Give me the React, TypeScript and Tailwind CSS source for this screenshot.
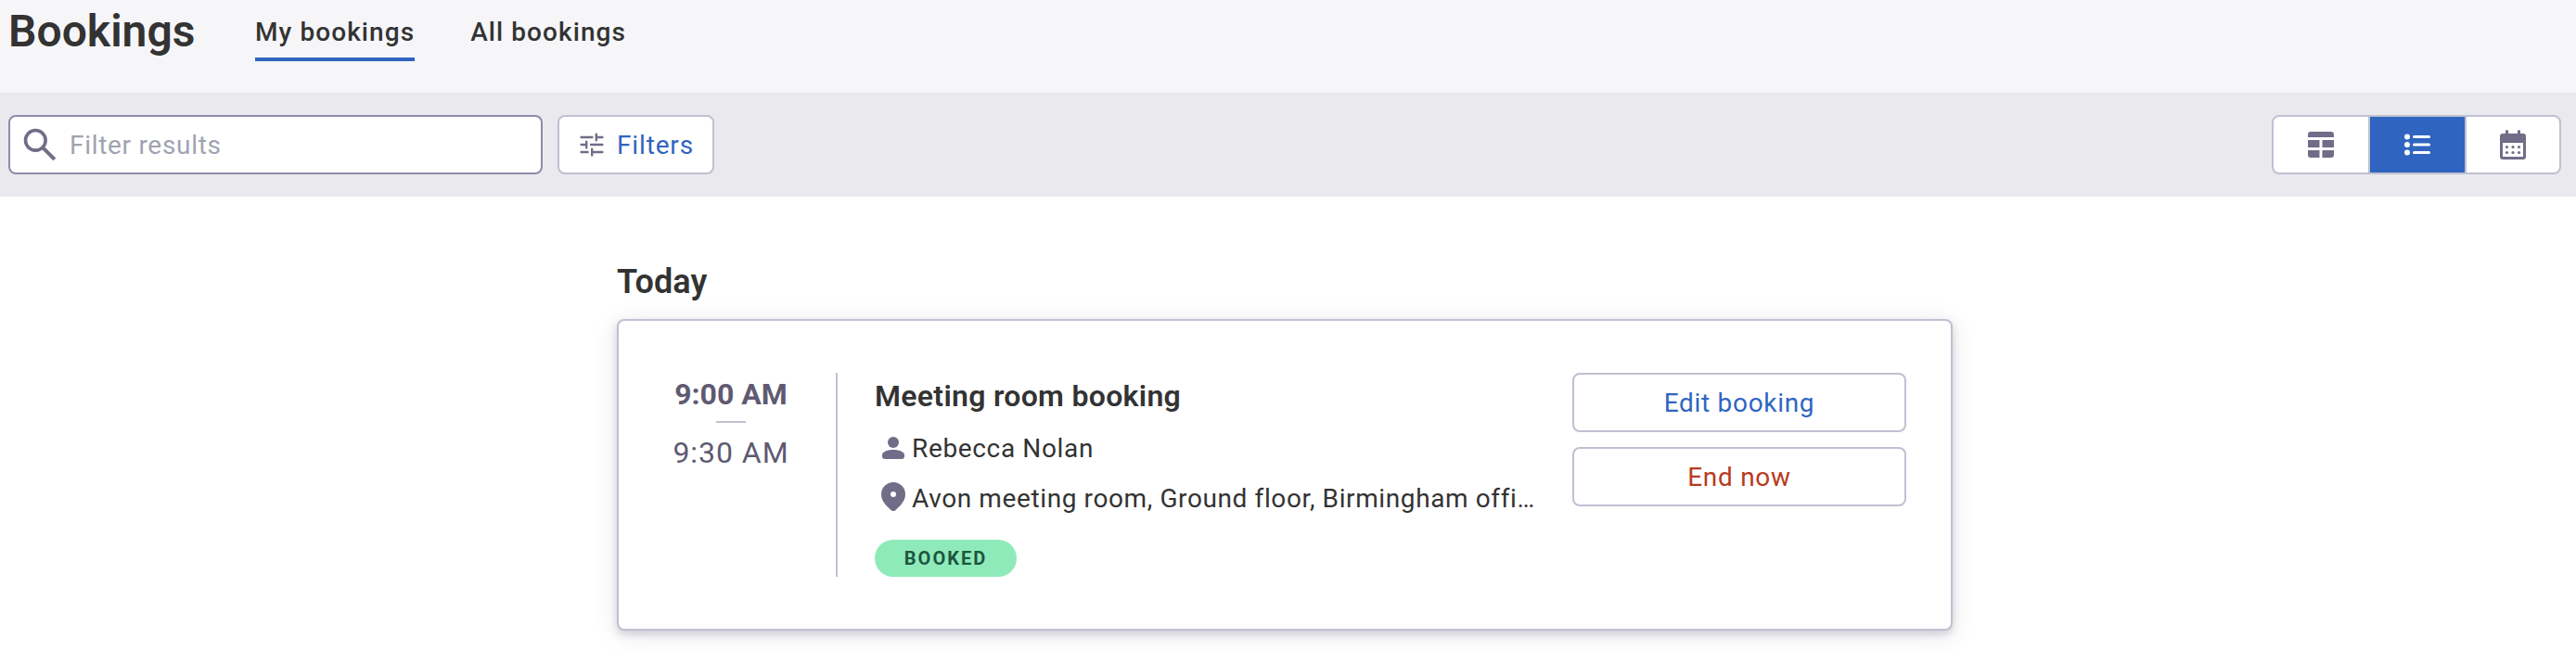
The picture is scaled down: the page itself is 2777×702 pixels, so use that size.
import React, { useState } from 'react'

type View = 'table' | 'list' | 'calendar'

const SearchIcon = () => (
    <svg width="36" height="36" viewBox="0 0 36 36" fill="none" stroke="#716c87" className="shrink-0">
        <circle cx="13.3" cy="13.3" r="10.8" strokeWidth="3.6" />
        <path d="M20.800 20.800 L33.900 33.900" strokeWidth="4" />
    </svg>
)

const TuneIcon = () => (
    <svg width="26" height="26" viewBox="0 0 26 26" fill="none" stroke="#716c87" strokeWidth="2.4" strokeLinecap="round" className="shrink-0">
        <path d="M1.6 5H13.4M18 5H24.4M17.8 1.6V8.2M1.6 13H7M12 13H24.4M7.2 9.8V16.4M1.6 21H8.6M13.4 21H24.4M13.2 17.8V24.4" />
    </svg>
)

const TableIcon = () => (
    <svg width="28" height="28" viewBox="0 0 28 28" fill="currentColor">
        <path d="M0 6V3a3 3 0 0 1 3-3h22a3 3 0 0 1 3 3v3zM0 9h12.5v8H0zM15.5 9H28v8H15.5zM0 20h12.5v8H3a3 3 0 0 1-3-3zM15.5 20H28v5a3 3 0 0 1-3 3h-9.500z" />
    </svg>
)

const ListIcon = () => (
    <svg width="28" height="24" viewBox="0 0 28 24" fill="currentColor">
        <circle cx="3" cy="3.500" r="3" />
        <circle cx="3" cy="12" r="3" />
        <circle cx="3" cy="20.500" r="3" />
        <rect x="9" y="2" width="19" height="3" rx="1.500" />
        <rect x="9" y="10.500" width="19" height="3" rx="1.500" />
        <rect x="9" y="19" width="19" height="3" rx="1.500" />
    </svg>
)

const CalendarIcon = () => (
    <svg width="28" height="32" viewBox="0 0 28 32" fill="currentColor">
        <path fillRule="evenodd" d="M3 4h3V1.500a1.500 1.500 0 0 1 3 0V4h10V1.500a1.500 1.500 0 0 1 3 0V4h3a3 3 0 0 1 3 3v22a3 3 0 0 1-3 3H3a3 3 0 0 1-3-3V7a3 3 0 0 1 3-3zM3 14v15h22V14z" />
        {[18.5, 24.5].map(y => [7.5, 14, 20.5].map(x => <circle key={`${x}-${y}`} cx={x} cy={y} r="1.600" />))}
    </svg>
)

const PersonIcon = () => (
    <svg width="24" height="24" viewBox="0 0 24 24" fill="#716c87" className="shrink-0">
        <circle cx="12" cy="6" r="6" />
        <path d="M0 19.500C0 15.800 7 14 12 14s12 1.800 12 5.500V21a3 3 0 0 1-3 3H3a3 3 0 0 1-3-3z" />
    </svg>
)

const PinIcon = () => (
    <svg width="26" height="31" viewBox="0 0 26 31" fill="#716c87" className="shrink-0">
        <path fillRule="evenodd" d="M13 0a13 13 0 0 1 13 13c0 6.500-4.500 12-11 17.400a3 3 0 0 1-4 0C4.500 25 0 19.500 0 13A13 13 0 0 1 13 0zm0 10a3 3 0 1 0 0 6 3 3 0 0 0 0-6z" />
    </svg>
)

const App: React.FC = () => {
    const [tab, setTab] = useState('My bookings')
    const [view, setView] = useState<View>('list')
    const [query, setQuery] = useState('')

    const views: { id: View; label: string; icon: React.ReactNode; cls: string }[] = [
        { id: 'table', label: 'Table', icon: <TableIcon />, cls: 'w-[102px]' },
        { id: 'list', label: 'List', icon: <ListIcon />, cls: 'w-[102px]' },
        { id: 'calendar', label: 'Calendar', icon: <CalendarIcon />, cls: 'w-[100px]' },
    ]

    const actionCls = "w-[360px] h-16 pt-[2px] rounded-lg border-2 border-[#bfc0d1] bg-white text-[28px] leading-8 tracking-[0.7px]"

    return (
        <div className="h-[702px] overflow-hidden bg-white font-['Roboto',sans-serif] text-[#333333]">
            <header className="flex items-start h-[100px] pl-[9px] bg-[#f6f6f9]">
                <h1 className="w-[266px] pt-[6px] text-[48px] leading-[56px] font-semibold">Bookings</h1>
                <nav className="flex gap-[60px] pt-[18px]">
                    {['My bookings', 'All bookings'].map(t => (
                        <button key={t} onClick={() => setTab(t)} className={`h-12 pb-[10px] border-b-4 text-[28px] leading-[34px] font-medium tracking-[1.08px] ${t === tab ? 'border-[#2f65c0]' : 'border-transparent'}`}>{t}</button>
                    ))}
                </nav>
            </header>

            <div className="flex items-center h-28 pl-[9px] pr-4 bg-[#eae9ee]">
                <label className="flex items-center gap-[14px] w-[576px] h-16 pl-[14px] rounded-lg border-2 border-[#8f8aa8] bg-white">
                    <SearchIcon />
                    <input value={query} onChange={e => setQuery(e.target.value)} placeholder="Filter results" className="flex-1 pt-[2px] text-[28px] tracking-[0.7px] placeholder:text-[#9fa3b1] outline-none" />
                </label>
                <button className="flex items-center gap-[14px] w-[169px] h-16 ml-4 pl-[22px] rounded-lg border-2 border-[#bfc0d1] bg-white text-[28px] tracking-[0.85px] text-[#2f65c0]">
                    <TuneIcon />
                    <span className="pt-px">Filters</span>
                </button>
                <div className="flex h-16 ml-auto rounded-lg border-2 border-[#bfc0d1] divide-x-2 divide-[#bfc0d1] bg-white overflow-hidden">
                    {views.map(v => (
                        <button key={v.id} aria-label={v.label} onClick={() => setView(v.id)} className={`box-content flex items-center justify-center ${v.cls} ${v.id === view ? 'bg-[#2f65c0] text-white' : 'text-[#716c87]'}`}>{v.icon}</button>
                    ))}
                </div>
            </div>

            <main className="w-[1440px] ml-[665px] pt-[71px]">
                <h2 className="h-[61px] text-[36px] leading-[42px] font-semibold tracking-[0.1px]">Today</h2>
                <article className="flex h-[336px] pt-14 pr-12 rounded-lg border-2 border-[#bfc0d1] bg-white shadow-[0_4px_8px_rgba(40,40,70,0.18),0_4px_28px_rgba(40,40,70,0.10)]">
                    <div className="flex flex-col items-center w-[236px] h-[220px] pl-2 border-r-2 border-[#bfc0d1] text-[32px] leading-10 text-[#5f5a72]">
                        <time className="pt-[3px] font-bold">9:00 AM</time>
                        <span className="w-8 h-[2px] mt-[9px] bg-[#bfc0d1]" />
                        <time className="mt-3 tracking-[0.95px]">9:30 AM</time>
                    </div>
                    <div className="flex flex-col w-[752px] h-[220px] pl-10">
                        <h3 className="pt-[5px] h-[51px] text-[32px] leading-10 font-semibold tracking-[0.3px]">Meeting room booking</h3>
                        <div className="flex items-center gap-2 h-[60px] pl-2">
                            <PersonIcon />
                            <span className="pt-px text-[28px] leading-9 tracking-[0.65px]">Rebecca Nolan</span>
                        </div>
                        <div className="flex items-start gap-[7px] h-12 pl-[7px] pt-[7px]">
                            <PinIcon />
                            <span className="text-[28px] leading-9 tracking-[0.61px] whitespace-nowrap">Avon meeting room, Ground floor, Birmingham offi…</span>
                        </div>
                        <span className="mt-auto flex items-center justify-center w-[153px] h-10 rounded-full bg-[#8eebb9] text-[20px] font-bold tracking-[2px] text-[#1e5540]">BOOKED</span>
                    </div>
                    <div className="flex flex-col gap-4 ml-10">
                        <button className={`${actionCls} text-[#2f65c0]`}>Edit booking</button>
                        <button className={`${actionCls} text-[#b83a20]`}>End now</button>
                    </div>
                </article>
            </main>
        </div>
    )
}

export default App
